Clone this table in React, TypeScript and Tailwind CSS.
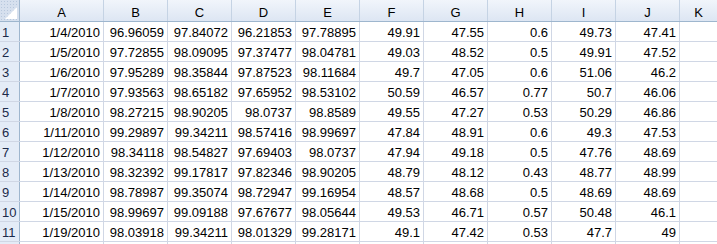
const COLS = ["A", "B", "C", "D", "E", "F", "G", "H", "I", "J"];

const ROWS: string[][] = [
  ["1/4/2010", "96.96059", "97.84072", "96.21853", "97.78895", "49.91", "47.55", "0.6", "49.73", "47.41"],
  ["1/5/2010", "97.72855", "98.09095", "97.37477", "98.04781", "49.03", "48.52", "0.5", "49.91", "47.52"],
  ["1/6/2010", "97.95289", "98.35844", "97.87523", "98.11684", "49.7", "47.05", "0.6", "51.06", "46.2"],
  ["1/7/2010", "97.93563", "98.65182", "97.65952", "98.53102", "50.59", "46.57", "0.77", "50.7", "46.06"],
  ["1/8/2010", "98.27215", "98.90205", "98.0737", "98.8589", "49.55", "47.27", "0.53", "50.29", "46.86"],
  ["1/11/2010", "99.29897", "99.34211", "98.57416", "98.99697", "47.84", "48.91", "0.6", "49.3", "47.53"],
  ["1/12/2010", "98.34118", "98.54827", "97.69403", "98.0737", "47.94", "49.18", "0.5", "47.76", "48.69"],
  ["1/13/2010", "98.32392", "99.17817", "97.82346", "98.90205", "48.79", "48.12", "0.43", "48.77", "48.99"],
  ["1/14/2010", "98.78987", "99.35074", "98.72947", "99.16954", "48.57", "48.68", "0.5", "48.69", "48.69"],
  ["1/15/2010", "98.99697", "99.09188", "97.67677", "98.05644", "49.53", "46.71", "0.57", "50.48", "46.1"],
  ["1/19/2010", "98.03918", "99.34211", "98.01329", "99.28171", "49.1", "47.42", "0.53", "47.7", "49"],
];

const font = { fontFamily: '"Liberation Sans", Arial, sans-serif' };

export default function App() {
  return (
    <div className="w-[717px] h-[244px] overflow-hidden bg-white text-[13px] text-black" style={font}>
      {/* header row */}
      <div className="flex h-[22px] bg-gradient-to-b from-[#f1f5fb] to-[#dde6f3] border-b border-[#9eb6ce]">
        <div className="relative w-[20px] shrink-0 border-r border-[#9eb6ce] bg-[#d6e0ee] bg-[radial-gradient(#b8c8dd_1px,transparent_1px)] bg-[length:3px_3px]">
          <div className="absolute right-[2px] bottom-[2px] w-0 h-0 border-l-[12px] border-l-transparent border-b-[12px] border-b-white" />
        </div>
        {COLS.map((c, i) => (
          <div
            key={c}
            className={`${i === 0 ? "w-[84px]" : "w-[64px]"} shrink-0 border-r border-[#c5d3e4] flex items-end justify-center pb-[2px] leading-none`}
          >
            {c}
          </div>
        ))}
        <div className="flex-1 flex items-end justify-center pb-[2px] leading-none">K</div>
      </div>

      {/* data rows */}
      {ROWS.map((r, ri) => (
        <div key={ri} className="flex h-[20px] border-b border-[#d0d7e5]">
          <div className="w-[20px] shrink-0 bg-[#e4ecf7] border-r border-[#9eb6ce] pl-[2px] flex items-end pb-[2px] leading-none text-[#1b2a4a]">
            {ri + 1}
          </div>
          {r.map((v, ci) => (
            <div
              key={ci}
              className={`${ci === 0 ? "w-[84px]" : "w-[64px]"} shrink-0 border-r border-[#d0d7e5] flex items-end justify-end pr-[3px] pb-[2px] leading-none`}
            >
              {v}
            </div>
          ))}
          <div className="flex-1" />
        </div>
      ))}
      <div className="flex h-[20px]">
        <div className="w-[20px] shrink-0 bg-[#e4ecf7] border-r border-[#9eb6ce]" />
        {COLS.map((c, i) => (
          <div key={c} className={`${i === 0 ? "w-[84px]" : "w-[64px]"} shrink-0 border-r border-[#d0d7e5]`} />
        ))}
      </div>
    </div>
  );
}
